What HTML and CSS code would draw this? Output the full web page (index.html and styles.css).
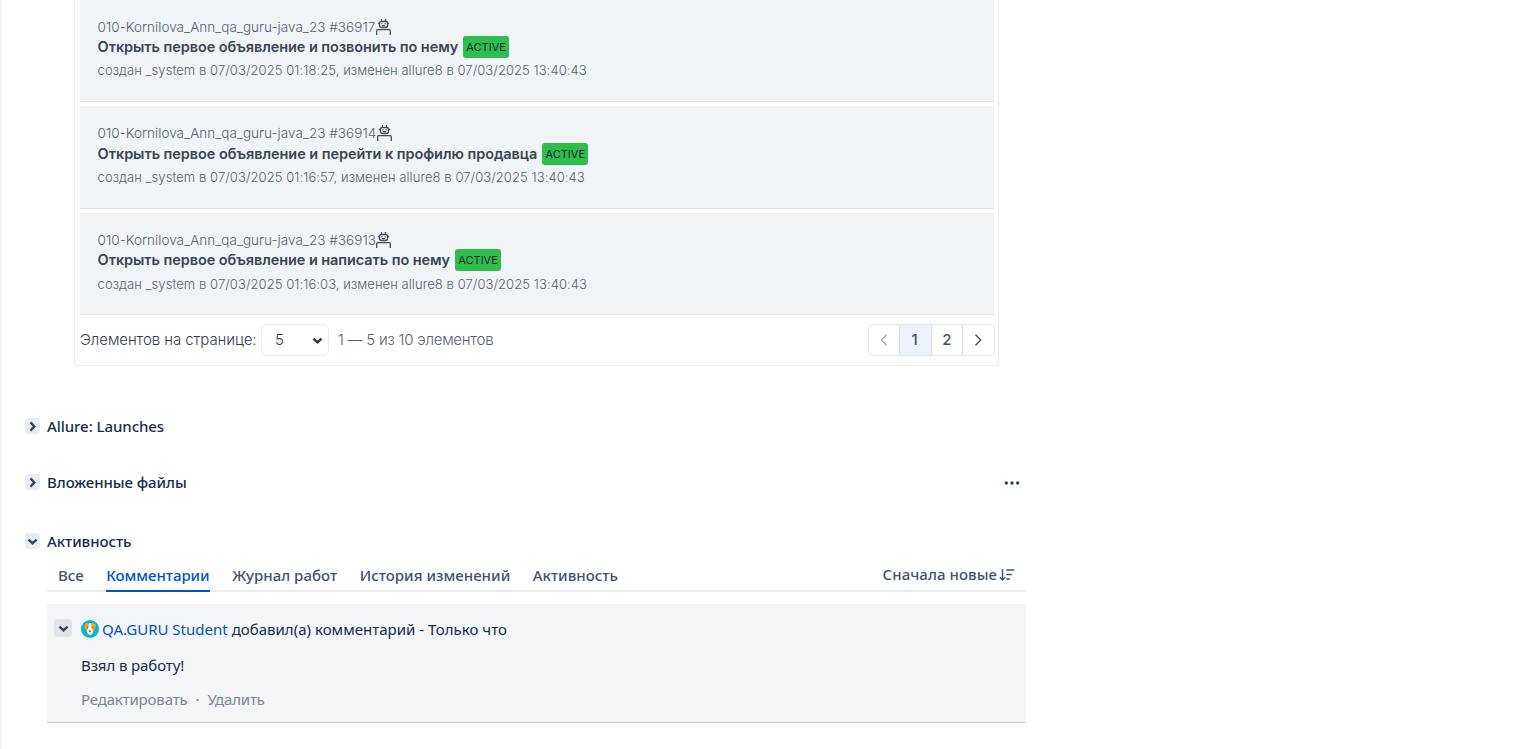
FILE: index.html
```html
<!DOCTYPE html>
<html lang="ru">
<head>
<meta charset="utf-8">
<title>Задача</title>
<link rel="stylesheet" href="styles.css">
</head>
<body>
<svg class="defs" width="0" height="0">
  <symbol id="robot" viewBox="0 0 15 16"><path d="M5.500 0v2.500M9.500 0v2.500M5 2.500h5a1.500 1.500 0 0 1 1.500 1.500v2.500A2 2 0 0 1 9.500 8.500h-4a2 2 0 0 1-2-2V4A1.500 1.500 0 0 1 5 2.500zM1.900 4.500h1.600M11.500 4.500h1.600M5.800 4.200v1.100M9.200 4.200v1.100M5.800 6.700h3.400M.7 16v-4.300a1 1 0 0 1 1-1h11.600a1 1 0 0 1 1 1V16" fill="none" stroke="currentColor" stroke-width="1.300"/></symbol>
  <symbol id="chev" viewBox="0 0 10 10"><path d="M1.300 3.200 5 6.600 8.700 3.200" fill="none" stroke="currentColor" stroke-width="2.200"/></symbol>
</svg>
<main class="issue">
  <section class="tests">
    <article class="card card-first">
      <div class="path"><span>010-Kornilova_Ann_qa_guru-java_23 #36917</span><svg class="robot"><use href="#robot"/></svg></div>
      <div class="name"><span>Открыть первое объявление и позвонить по нему</span><span class="badge">ACTIVE</span></div>
      <div class="meta">создан _system в 07/03/2025 01:18:25, изменен allure8 в 07/03/2025 13:40:43</div>
    </article>
    <article class="card card-tall">
      <div class="path"><span>010-Kornilova_Ann_qa_guru-java_23 #36914</span><svg class="robot"><use href="#robot"/></svg></div>
      <div class="name"><span>Открыть первое объявление и перейти к профилю продавца</span><span class="badge">ACTIVE</span></div>
      <div class="meta">создан _system в 07/03/2025 01:16:57, изменен allure8 в 07/03/2025 13:40:43</div>
    </article>
    <article class="card">
      <div class="path"><span>010-Kornilova_Ann_qa_guru-java_23 #36913</span><svg class="robot"><use href="#robot"/></svg></div>
      <div class="name"><span>Открыть первое объявление и написать по нему</span><span class="badge">ACTIVE</span></div>
      <div class="meta">создан _system в 07/03/2025 01:16:03, изменен allure8 в 07/03/2025 13:40:43</div>
    </article>
    <footer class="pager">
      <span class="per-page">Элементов на странице:</span>
      <span class="select"><span>5</span><svg><use href="#chev"/></svg></span>
      <span class="range">1 — 5 из 10 элементов</span>
      <nav class="pages">
        <a class="prev"><svg viewBox="0 0 8 12"><path d="M6.500 .8 1.300 6l5.200 5.200" fill="none" stroke="currentColor" stroke-width="1.300"/></svg></a>
        <a class="current">1</a><a>2</a>
        <a class="next"><svg viewBox="0 0 8 12"><path d="M1.500 .8 6.700 6l-5.200 5.200" fill="none" stroke="currentColor" stroke-width="1.400"/></svg></a>
      </nav>
    </footer>
  </section>

  <section class="module launches"><span class="toggle closed"><svg><use href="#chev"/></svg></span><h4>Allure: Launches</h4></section>
  <section class="module files"><span class="toggle closed"><svg><use href="#chev"/></svg></span><h4>Вложенные файлы</h4>
    <svg class="more" viewBox="0 0 16 4"><circle cx="2.300" cy="2" r="1.700"/><circle cx="8" cy="2" r="1.700"/><circle cx="13.700" cy="2" r="1.700"/></svg></section>
  <section class="module activity"><span class="toggle"><svg><use href="#chev"/></svg></span><h4>Активность</h4></section>

  <div class="tabs">
    <a>Все</a><a class="selected">Комментарии</a><a>Журнал работ</a><a>История изменений</a><a>Активность</a>
    <span class="sort"><span>Сначала новые</span><svg viewBox="0 0 16 14"><path d="M3.500 1v11M.8 9.300l2.700 2.700 2.700-2.700M7.300 2h8M7.300 6.500h5.500M7.300 11h3.500" fill="none" stroke="currentColor" stroke-width="1.500"/></svg></span>
  </div>

  <article class="comment">
    <span class="toggle big"><svg><use href="#chev"/></svg></span>
    <div class="content">
      <div class="author">
        <svg class="avatar" viewBox="0 0 18 18"><circle cx="9" cy="9" r="9" fill="#00b8d9"/><path d="M3.300 4.300 6.500 3h5l3.200 1.300-.4 4.200-1.300.8-1 4.200L9 15l-3-1.500-1-4.200-1.300-.8z" fill="#ff991f"/><path d="M8 3h2l.6 4.500 1.700 3.500-1 2.700L9 15l-2.300-1.300-1-2.700 1.700-3.500z" fill="#fff"/><circle cx="6.700" cy="7.600" r=".7" fill="#42526e"/><circle cx="11.300" cy="7.600" r=".7" fill="#42526e"/><path d="M7.500 10.500h3L9 12.500z" fill="#42526e"/></svg>
        <a>QA.GURU Student</a><span class="event">добавил(а) комментарий - Только что</span>
      </div>
      <p>Взял в работу!</p>
      <div class="actions"><a>Редактировать</a><i>·</i><a>Удалить</a></div>
    </div>
  </article>
</main>
</body>
</html>
```
FILE: styles.css
```css
* { box-sizing: border-box; }
body { margin: 0; background: #fff; color: #172b4d; font: 15px/20px "Noto Sans", sans-serif; }
.defs { display: none; }
svg { display: block; flex: none; }
.issue { width: 1026px; height: 749px; overflow: hidden; border-left: 2px solid #f4f5f7; }

.tests { width: 925px; height: 366px; margin-left: 72px; padding: 0 4px 0 5px; border: 1px solid #e6ebf1; border-top: 0; border-radius: 0 0 4px 4px; font-family: Inter, sans-serif; color: #58606f; }
.card { height: 102px; padding: 18px 0 0 17.600px; background: #f0f4f7; border-bottom: 1px solid #dce4ec; }
.card-first, .card-tall { margin-bottom: 4px; }
.card-tall { height: 103px; }
.path { display: flex; height: 18px; line-height: 19px; font-size: 13.500px; font-weight: 300; letter-spacing: .03px; }
.robot { width: 15px; height: 16px; margin: 1px 0 0 .4px; color: #434c5c; }
.name { display: flex; align-items: center; gap: 5px; height: 22px; font-size: 14.500px; font-weight: 600; letter-spacing: -.075px; color: #3c4453; }
.card-tall .name { height: 23px; padding-top: 1px; letter-spacing: -.06px; }
.badge { width: 46px; height: 22px; line-height: 22px; border-radius: 3px; background: #2dbe4e; color: #172b2b; text-align: center; font-size: 11px; font-weight: 400; letter-spacing: 0; }
.meta { height: 26px; line-height: 26px; font-size: 13px; font-weight: 300; letter-spacing: .07px; }
.card-first .meta, .card-tall .meta { line-height: 24px; }
.pager { display: flex; align-items: center; height: 50px; font-size: 15px; font-weight: 300; }
.per-page { color: #343c4b; letter-spacing: -.07px; }
.range { letter-spacing: -.23px; }
.select { display: flex; align-items: center; justify-content: space-between; width: 68px; height: 32px; margin: 0 9px 0 4.500px; padding: 0 4px 0 13px; border: 1px solid #e6ebf1; border-radius: 6px; color: #343c4b; }
.select svg { width: 11px; height: 11px; margin-right: .500px; }
.pages { display: flex; width: 127px; height: 32px; margin: 0 -1px 0 auto; border: 1px solid #e6ebf1; border-radius: 4px; color: #4c5565; }
.pages a { display: flex; align-items: center; justify-content: center; width: 32px; height: 30px; font-weight: 500; border-left: 1px solid #d3deea; }
.pages .prev { width: 30px; border: 0; color: #a5abb4; }
.pages .current { background: #edf2fe; padding-right: 1px; }
.pages .next { padding-right: 2px; }
.pages svg { width: 8px; height: 12px; }

.module { display: flex; align-items: center; height: 20px; margin-left: 23px; }
.launches { margin-top: 50px; }
.files { margin-top: 36px; }
.activity { margin-top: 39px; }
h4 { margin: 0 0 0 7px; font-size: 15px; font-weight: 550; letter-spacing: -.06px; }
.toggle { display: flex; align-items: center; justify-content: center; width: 15px; height: 16px; border-radius: 3px; background: #ebecf0; color: #344563; }
.toggle svg { width: 11px; height: 11px; }
.closed svg { transform: rotate(-90deg); }
.more { width: 16px; height: 4px; margin: 2px 6px 0 auto; fill: #344563; }

.tabs { display: flex; align-items: flex-start; gap: 22.500px; height: 33px; margin: 8px 0 12px 45px; padding: 0 11px; border-bottom: 2px solid #ebecf0; color: #42526e; font-weight: 500; letter-spacing: .03px; }
.tabs > a { height: 33px; line-height: 32px; }
.tabs .selected { border-bottom: 2px solid #0052cc; color: #0052cc; letter-spacing: -.04px; }
.sort { display: flex; align-items: center; gap: 2px; height: 30px; margin-left: auto; letter-spacing: .06px; }
.sort svg { width: 16px; height: 14px; margin-top: 1px; }

.comment { display: flex; height: 119px; margin-left: 45px; padding: 15px 7px 0; background: #f4f5f7; border-bottom: 1px solid #c1c7d0; }
.big { width: 18px; height: 18px; background: #e4e5ea; }
.content { margin-left: 9px; }
.author { display: flex; align-items: center; height: 20px; }
.avatar { width: 18px; height: 18px; margin-right: 3px; }
.author a { color: #0052cc; margin-right: 4px; }
.event { letter-spacing: .02px; }
p { margin: 16px 0 14px; letter-spacing: -.1px; }
.actions { display: flex; color: #7a869a; letter-spacing: -.16px; }
.actions i { width: 20px; text-align: center; font-style: normal; }
```
